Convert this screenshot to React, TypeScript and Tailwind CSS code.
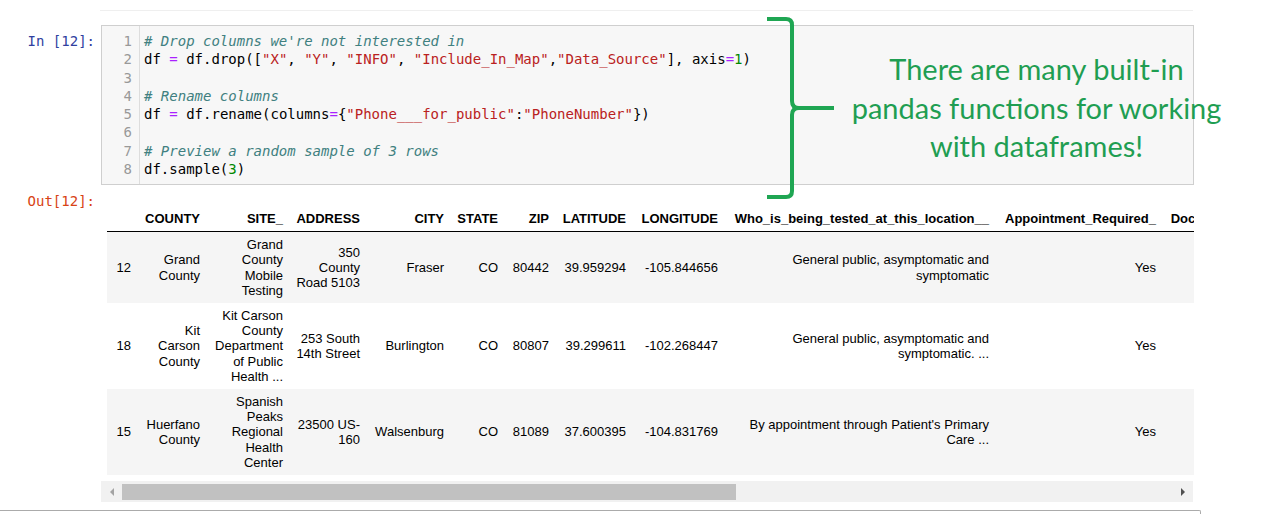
import React from "react";

const C = ({ children }: { children: React.ReactNode }) => (
  <span className="italic text-[#408080]">{children}</span>
);
const S = ({ children }: { children: React.ReactNode }) => (
  <span className="text-[#ba2121]">{children}</span>
);
const O = ({ children }: { children: React.ReactNode }) => (
  <span className="text-[#aa22ff]">{children}</span>
);
const N = ({ children }: { children: React.ReactNode }) => (
  <span className="text-[#008800]">{children}</span>
);

const codeLines: React.ReactNode[] = [
  <C># Drop columns we're not interested in</C>,
  <>
    df <O>=</O> df.drop([<S>"X"</S>, <S>"Y"</S>, <S>"INFO"</S>, <S>"Include_In_Map"</S>,<S>"Data_Source"</S>], axis<O>=</O><N>1</N>)
  </>,
  <>&nbsp;</>,
  <C># Rename columns</C>,
  <>
    df <O>=</O> df.rename(columns<O>=</O>{"{"}<S>"Phone___for_public"</S>:<S>"PhoneNumber"</S>{"})"}
  </>,
  <>&nbsp;</>,
  <C># Preview a random sample of 3 rows</C>,
  <>
    df.sample(<N>3</N>)
  </>,
];

const headers = [
  "",
  "COUNTY",
  "SITE_",
  "ADDRESS",
  "CITY",
  "STATE",
  "ZIP",
  "LATITUDE",
  "LONGITUDE",
  "Who_is_being_tested_at_this_location__",
  "Appointment_Required_",
  "Doctor_Order_Required_",
];

const widths = [30, 69, 83, 77, 84, 54, 51, 77, 92, 271, 167, 170];

const rows = [
  [
    "12",
    "Grand County",
    "Grand County Mobile Testing",
    "350 County Road 5103",
    "Fraser",
    "CO",
    "80442",
    "39.959294",
    "-105.844656",
    "General public, asymptomatic and symptomatic",
    "Yes",
    "",
  ],
  [
    "18",
    "Kit Carson County",
    "Kit Carson County Department of Public Health ...",
    "253 South 14th Street",
    "Burlington",
    "CO",
    "80807",
    "39.299611",
    "-102.268447",
    "General public, asymptomatic and symptomatic. ...",
    "Yes",
    "",
  ],
  [
    "15",
    "Huerfano County",
    "Spanish Peaks Regional Health Center",
    "23500 US-160",
    "Walsenburg",
    "CO",
    "81089",
    "37.600395",
    "-104.831769",
    "By appointment through Patient's Primary Care ...",
    "Yes",
    "",
  ],
];

export default function App() {
  return (
    <div className="relative w-[1268px] h-[531px] overflow-hidden bg-white text-black">
      {/* faint top separator */}
      <div className="pt-[10px]">
        <div className="ml-[100px] w-[1093px] h-px bg-[#efefef]" />
      </div>

      {/* input cell */}
      <div className="mt-[14px] flex">
        <div className="w-[101px] shrink-0 pr-[6px] pt-[7px] text-right font-['DejaVu_Sans_Mono',monospace] text-[14px] leading-[18.3px] text-[#303f9f]">
          In&nbsp;[12]:
        </div>
        <div className="w-[1093px] h-[160px] border border-[#cfcfcf] bg-[#f7f7f7] flex font-['DejaVu_Sans_Mono',monospace] text-[14px] leading-[18.3px]">
          <div className="w-[38px] shrink-0 border-r border-[#dddddd] pt-[6px] pr-[7px] text-right text-[#999999]">
            {codeLines.map((_, i) => (
              <div key={i}>{i + 1}</div>
            ))}
          </div>
          <div className="pl-[4px] pt-[6px] whitespace-pre text-black">
            {codeLines.map((l, i) => (
              <div key={i}>{l}</div>
            ))}
          </div>
        </div>
      </div>

      {/* output cell */}
      <div className="flex">
        <div className="w-[101px] shrink-0 pr-[6px] pt-[7px] text-right font-['DejaVu_Sans_Mono',monospace] text-[14px] leading-[18.3px] text-[#d84315]">
          Out[12]:
        </div>
        <div className="w-[1093px] pt-[21px]">
          <div className="w-[1093px] overflow-hidden pl-[6px]">
            <table className="table-fixed border-collapse font-['Liberation_Sans',Arial,sans-serif] text-[13px] leading-[15.2px] w-[1210px]">
              <colgroup>
                {widths.map((w, i) => (
                  <col key={i} style={{ width: w }} />
                ))}
              </colgroup>
              <thead>
                <tr className="border-b border-black">
                  {headers.map((h, i) => (
                    <th
                      key={i}
                      className="px-[6px] py-[5px] text-right font-bold align-bottom whitespace-nowrap"
                    >
                      {h}
                    </th>
                  ))}
                </tr>
              </thead>
              <tbody>
                {rows.map((r, ri) => (
                  <tr key={ri} className={ri % 2 === 0 ? "bg-[#f5f5f5]" : "bg-white"}>
                    {r.map((c, ci) => (
                      <td
                        key={ci}
                        className="px-[6px] py-[5px] text-right align-middle"
                      >
                        {c}
                      </td>
                    ))}
                  </tr>
                ))}
              </tbody>
            </table>
          </div>

          {/* horizontal scrollbar */}
          <div className="mt-[6px] w-[1092px] h-[21px] bg-[#f1f1f1] flex items-center">
            <div className="w-[21px] h-[21px] flex items-center justify-center">
              <div className="w-0 h-0 border-y-[4px] border-y-transparent border-r-[4px] border-r-[#a3a3a3]" />
            </div>
            <div className="w-[614px] h-[16px] bg-[#c1c1c1]" />
            <div className="flex-1" />
            <div className="w-[21px] h-[21px] flex items-center justify-center">
              <div className="w-0 h-0 border-y-[4px] border-y-transparent border-l-[4px] border-l-[#505050]" />
            </div>
          </div>
        </div>
      </div>

      {/* next cell top edge */}
      <div className="mt-[8px] w-[1201px] h-[4px] border-t border-r border-[#ababab] rounded-tr-[2px]" />

      {/* annotation overlay */}
      <svg
        className="absolute left-[760px] top-[12px]"
        width="80"
        height="192"
        viewBox="760 12 80 192"
        fill="none"
      >
        <path
          d="M767 19 H786 Q792 19 792 25 V101 Q792 108 799 108 H834 M799 108 Q792 108 792 115 V191 Q792 197 786 197 H767"
          stroke="#1fa653"
          strokeWidth="4"
        />
      </svg>
      <div className="absolute left-[836px] top-[50px] w-[401px] text-center font-['Lato',sans-serif] text-[29px] leading-[38.5px] text-[#1f9e52]">
        <div>There are many built-in</div>
        <div>pandas functions for working</div>
        <div>with dataframes!</div>
      </div>
    </div>
  );
}
